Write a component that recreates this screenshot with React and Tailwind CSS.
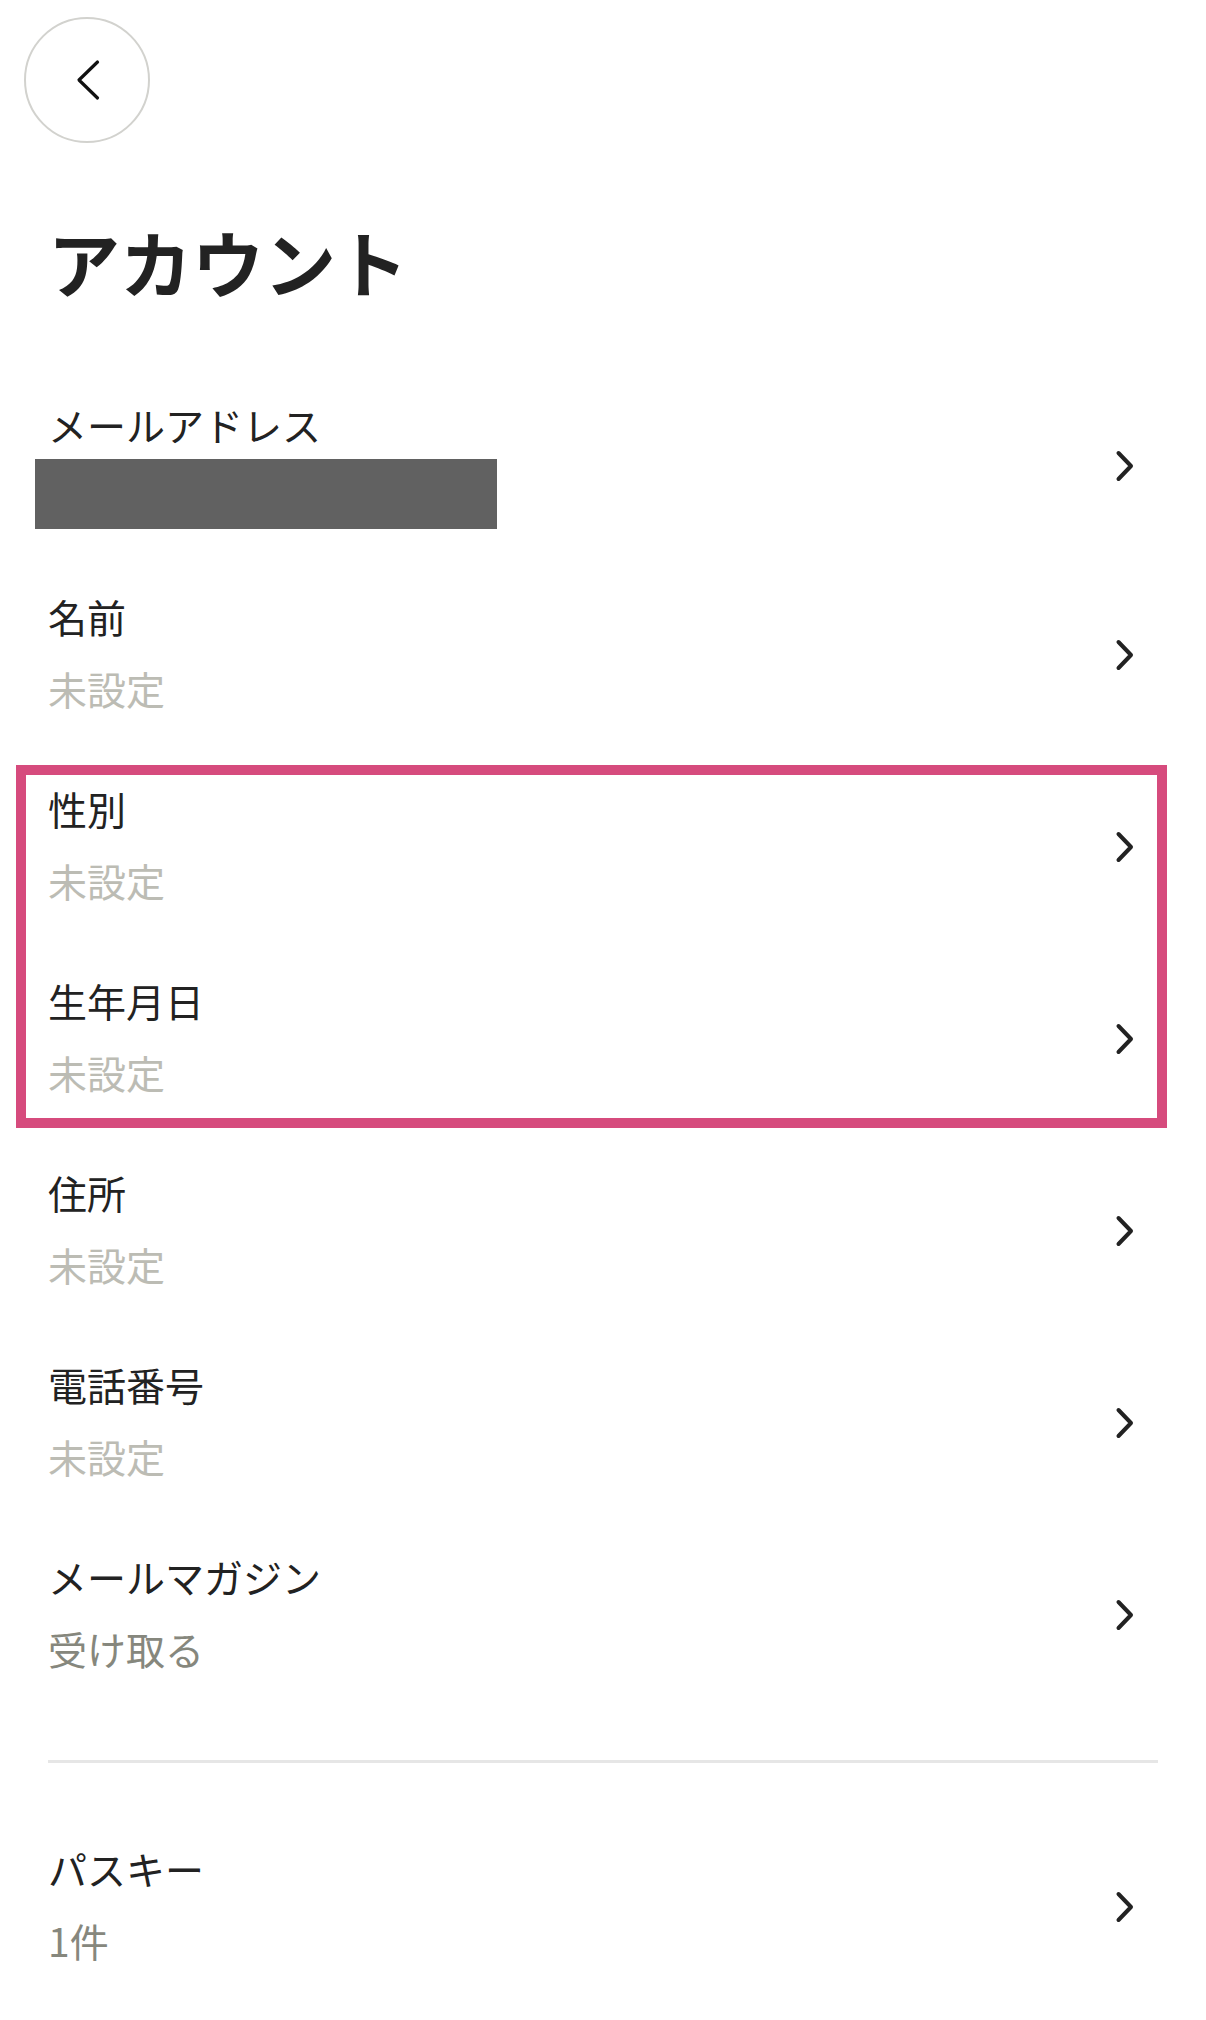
import React from "react";

const Chevron = () => (
  <svg width="20" height="32" viewBox="0 0 20 32" fill="none" className="shrink-0 mt-[6px]">
    <polyline points="3.5,3 16,16 3.5,29" stroke="#222222" strokeWidth="4" strokeLinecap="round" strokeLinejoin="round" />
  </svg>
);

const Row = ({ label, sub, subClass }) => (
  <div className="flex items-center justify-between pl-[48px] pr-[71px] pt-[30px] pb-[34px]">
    <div className="flex flex-col gap-[16px]">
      <div className="text-[39px] leading-[56px] text-[#222222]">{label}</div>
      <div className={`text-[39px] leading-[56px] ${subClass}`}>{sub}</div>
    </div>
    <Chevron />
  </div>
);

const UNSET = "text-[#bcbcb4]";
const DARK = "text-[#86877d]";

export default function App() {
  return (
    <div
      className="w-[1206px] min-h-[2020px] bg-white"
      style={{ fontFamily: '"Noto Sans CJK JP", "Noto Sans", sans-serif' }}
    >
      <div className="pt-[17px] pl-[24px]">
        <div className="w-[126px] h-[126px] rounded-full border-[2.5px] border-[#d2d2ce] flex items-center justify-center">
          <svg width="26" height="42" viewBox="0 0 26 42" fill="none" className="ml-[3px]">
            <polyline points="21.5,3 3,21 21.5,39" stroke="#111111" strokeWidth="3.2" strokeLinecap="round" strokeLinejoin="round" />
          </svg>
        </div>
      </div>

      <h1 className="mt-[68px] px-[48px] text-[72px] leading-[100px] font-bold text-[#222222]">
        アカウント
      </h1>

      <div className="mt-[55px]">
        <div className="flex items-center justify-between pl-[48px] pr-[71px] pt-[30px] pb-[29px]">
          <div className="flex flex-col">
            <div className="text-[39px] leading-[56px] text-[#222222]">メールアドレス</div>
            <div className="mt-[7px] -ml-[13px] w-[462px] h-[70px] bg-[#616161]" />
          </div>
          <Chevron />
        </div>

        <Row label="名前" sub="未設定" subClass={UNSET} />

        <div className="relative">
          <Row label="性別" sub="未設定" subClass={UNSET} />
          <Row label="生年月日" sub="未設定" subClass={UNSET} />
          <div className="absolute top-[15px] bottom-[6px] left-[16px] right-[39px] border-[10px] border-[#d64b7d] pointer-events-none" />
        </div>

        <Row label="住所" sub="未設定" subClass={UNSET} />
        <Row label="電話番号" sub="未設定" subClass={UNSET} />
        <Row label="メールマガジン" sub="受け取る" subClass={DARK} />

        <div className="mt-[50px] mx-[48px] h-[3px] bg-[#e6e6e6]" />

        <div className="mt-[47px]">
          <Row label="パスキー" sub="1件" subClass={DARK} />
        </div>
      </div>
    </div>
  );
}
